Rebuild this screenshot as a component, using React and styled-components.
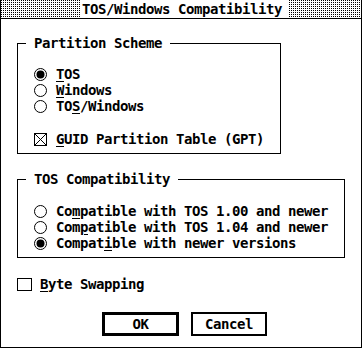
import React from "react";
import styled, { createGlobalStyle } from "styled-components";

const Global = createGlobalStyle`
  body {
    margin: 0;
    background: #fff;
  }
`;

const Dialog = styled.div`
  width: 362px;
  height: 348px;
  box-sizing: border-box;
  border: 1px solid #000;
  border-top: none;
  display: flex;
  flex-direction: column;
  color: #000;
  background: #fff;
  font-family: "DejaVu Sans Mono", "Liberation Mono", monospace;
  font-weight: bold;
  font-size: 14px;
  letter-spacing: -0.43px;
  line-height: 16px;
`;

const TitleBar = styled.div`
  height: 18px;
  border-bottom: 1px solid #000;
  display: flex;
  padding-left: 79px;
  background-color: #fff;
  background-image: conic-gradient(from 270deg at 1px 1px, #000 0 25%, #fff 0 100%);
  background-size: 2px 2px;
`;

const TitleText = styled.div`
  background: #fff;
  padding: 0 7px 0 2px;
  line-height: 18px;
`;

const Body = styled.div`
  padding: 0 16px;
  display: flex;
  flex-direction: column;
  align-items: flex-start;
`;

const Group = styled.fieldset`
  margin: ${(p) => p.$top}px 0 0;
  padding: ${(p) => p.$inset}px 0 6px 0;
  border: 1px solid #000;
  width: ${(p) => p.$width}px;
  box-sizing: border-box;
  min-width: 0;
`;

const Legend = styled.legend`
  margin-left: 8px;
  padding: 0 8px;
  line-height: 16px;
`;

const Options = styled.div`
  padding-left: 16px;
  display: flex;
  flex-direction: column;
`;

const Row = styled.div`
  display: flex;
  align-items: center;
  gap: ${(p) => p.$gap || 9}px;
  height: 16px;
  margin-top: ${(p) => p.$top || 0}px;
  white-space: pre;
`;

const Key = styled.span`
  text-decoration: underline;
  text-decoration-thickness: 1px;
  text-underline-offset: 2px;
`;

const Buttons = styled.div`
  display: flex;
  gap: 12px;
  margin-top: 20px;
  padding-left: 101px;
`;

const Button = styled.button`
  width: ${(p) => p.$width}px;
  height: 24px;
  box-sizing: border-box;
  padding: 0;
  background: #fff;
  color: #000;
  border: ${(p) => (p.$default ? 3 : 2)}px solid #000;
  border-radius: 0;
  font: inherit;
  letter-spacing: inherit;
  line-height: 16px;
  text-align: center;
`;

const Radio = ({ on }) => (
  <svg width="13" height="13" viewBox="0 0 13 13">
    <circle cx="6.5" cy="6.5" r="6" fill="#fff" stroke="#000" strokeWidth="1" />
    {on && <circle cx="6.5" cy="6.5" r="4" fill="#000" />}
  </svg>
);

const Check = ({ on, w = 13, h = 13 }) => (
  <svg width={w} height={h} viewBox={`0 0 ${w} ${h}`} shapeRendering="crispEdges">
    <rect x="0.5" y="0.5" width={w - 1} height={h - 1} fill="#fff" stroke="#000" />
    {on && (
      <g stroke="#000" shapeRendering="auto">
        <line x1="1" y1="1" x2={w - 1} y2={h - 1} />
        <line x1={w - 1} y1="1" x2="1" y2={h - 1} />
      </g>
    )}
  </svg>
);

export default function App() {
  return (
    <>
      <Global />
      <Dialog>
        <TitleBar>
          <TitleText>TOS/Windows Compatibility</TitleText>
        </TitleBar>
        <Body>
          <Group $top={16} $inset={15} $width={264}>
            <Legend>Partition Scheme</Legend>
            <Options>
              <Row>
                <Radio on />
                <span><Key>T</Key>OS</span>
              </Row>
              <Row>
                <Radio />
                <span><Key>W</Key>indows</span>
              </Row>
              <Row>
                <Radio />
                <span>TO<Key>S</Key>/Windows</span>
              </Row>
              <Row $top={17}>
                <Check on />
                <span><Key>G</Key>UID Partition Table (GPT)</span>
              </Row>
            </Options>
          </Group>

          <Group $top={17} $inset={16} $width={328}>
            <Legend>TOS Compatibility</Legend>
            <Options>
              <Row>
                <Radio />
                <span>Co<Key>m</Key>patible with TOS 1.00 and newer</span>
              </Row>
              <Row>
                <Radio />
                <span>Com<Key>p</Key>atible with TOS 1.04 and newer</span>
              </Row>
              <Row>
                <Radio on />
                <span>Compat<Key>i</Key>ble with newer versions</span>
              </Row>
            </Options>
          </Group>

          <Row $top={18} $gap={8}>
            <Check w={15} h={13} />
            <span><Key>B</Key>yte Swapping</span>
          </Row>
        </Body>
        <Buttons>
          <Button $default $width={77}>OK</Button>
          <Button $width={76}>Cancel</Button>
        </Buttons>
      </Dialog>
    </>
  );
}
